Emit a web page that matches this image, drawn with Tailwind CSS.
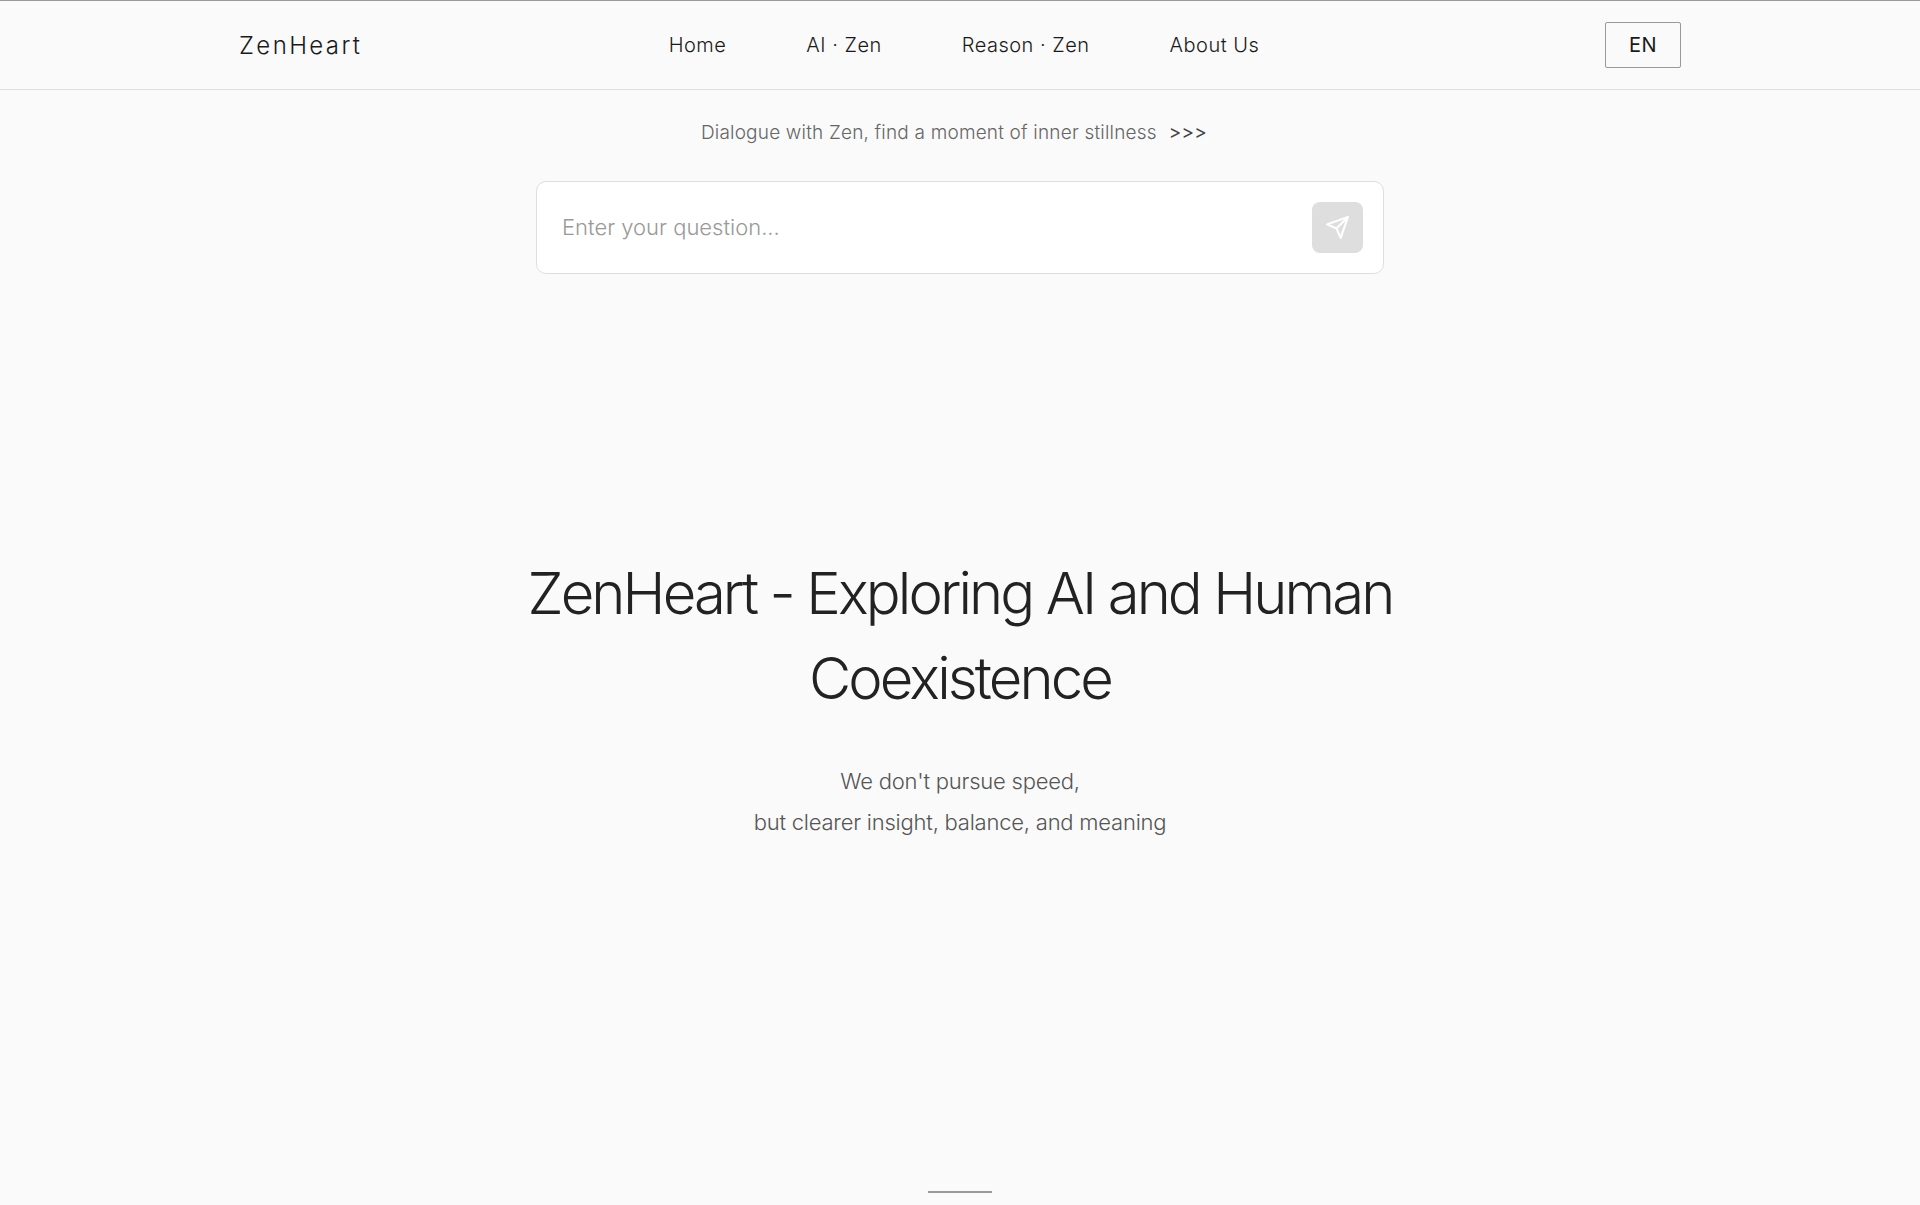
<!DOCTYPE html>
<html lang="en">
<head>
  <meta charset="UTF-8" />
  <meta name="viewport" content="width=device-width, initial-scale=1.0" />
  <title>ZenHeart</title>
  <script src="https://cdn.jsdelivr.net/npm/@tailwindcss/browser@4"></script>
</head>

<body class="min-h-screen flex flex-col bg-[#fafafa] font-['Inter','Liberation_Sans',sans-serif] font-light text-[#1a1a1a] border-t border-[#999]">
  <header class="border-b border-[#dedede]">
    <div class="max-w-[1442px] mx-auto h-22 grid grid-cols-[1fr_auto_1fr] items-center">
      <a href="#" class="pt-0.5 text-2xl tracking-widest">ZenHeart</a>

      <nav class="flex gap-20 pl-2 text-xl tracking-wide">
        <a href="#">Home</a>
        <a href="#">AI · Zen</a>
        <a href="#">Reason · Zen</a>
        <a href="#">About Us</a>
      </nav>

      <button type="button" class="justify-self-end w-[76px] h-[46px] border border-[#999] rounded-xs text-xl font-normal tracking-wide">EN</button>
    </div>
  </header>

  <main class="flex-1 flex flex-col items-center">
    <section class="w-full max-w-[848px] pt-7">
      <p class="flex justify-center gap-3 pr-3 text-[19px] leading-[30px] tracking-[0.01em] text-[#666]">
        <label for="question">Dialogue with Zen, find a moment of inner stillness</label>
        <span class="font-normal text-[#444]">&gt;&gt;&gt;</span>
      </p>

      <form class="mt-[33px] h-[93px] flex items-center pl-[25px] pr-5 bg-white border border-[#dedede] rounded-[10px]">
        <input id="question" type="text" placeholder="Enter your question..."
          class="flex-1 text-[22px] placeholder:text-[#999] outline-none" />
        <button type="submit" aria-label="Send" class="size-[51px] flex items-center justify-center bg-[#dedede] rounded-lg">
          <svg class="size-[25px]" viewBox="0 0 24 24" fill="none" stroke="#fff" stroke-width="2" stroke-linejoin="round">
            <path d="M22 2 15 22l-4-9-9-4L22 2Z" />
            <path d="M22 2 11 13" />
          </svg>
        </button>
      </form>
    </section>

    <!-- Hero -->
    <section class="flex-1 w-full max-w-[900px] flex flex-col justify-center pb-18 text-center">
      <h1 class="text-[58px] leading-[85px] tracking-tighter text-[#222]">ZenHeart - Exploring AI and Human Coexistence</h1>
      <p class="mt-10 text-[22px] leading-[41px] tracking-[-0.01em] text-[#555]">We don't pursue speed,<br />but clearer insight, balance, and meaning</p>
    </section>

    <div class="w-16 h-0.5 mb-3 bg-[#999]"></div>
  </main>
</body>
</html>
